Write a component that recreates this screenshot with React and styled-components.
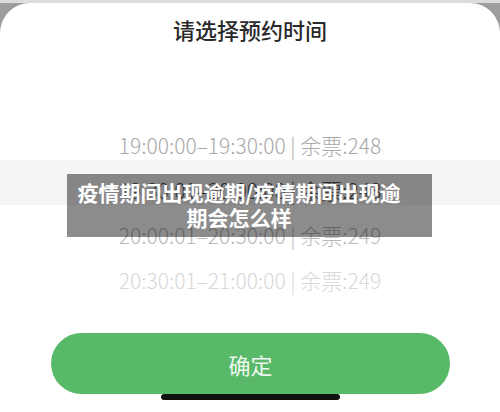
import React from "react";
import styled, { createGlobalStyle } from "styled-components";

const Global = createGlobalStyle`
  html, body { margin: 0; padding: 0; }
  body { font-family: "Noto Sans CJK SC", "Noto Sans", sans-serif; }
`;

const Screen = styled.div`
  position: relative;
  width: 500px;
  height: 412px;
  overflow: hidden;
  background: linear-gradient(to bottom, #dcdcdc 0 3px, #9d9d9d 3px);
`;

const Sheet = styled.div`
  margin-top: 3px;
  height: 409px;
  background: #fff;
  border-radius: 30px 30px 0 0;
  display: flex;
  flex-direction: column;
`;

const Title = styled.h1`
  margin: 11px 0 0;
  font-size: 22px;
  line-height: 30px;
  font-weight: 500;
  color: #2a2a2a;
  text-align: center;
`;

const Picker = styled.div`
  position: relative;
  margin-top: 78px;
  display: flex;
  flex-direction: column;
`;

const SelectionBand = styled.div`
  position: absolute;
  left: 0;
  right: 0;
  top: 38px;
  height: 45px;
  background: #f4f4f6;
`;

const Row = styled.div`
  position: relative;
  height: 45px;
  display: flex;
  align-items: center;
  justify-content: center;
  font-size: 21px;
  font-weight: 300;
  color: ${(p) => p.$color};
  white-space: pre;
`;

const ConfirmButton = styled.button`
  margin: 31px 50px 0 51px;
  height: 61px;
  border: none;
  border-radius: 31px;
  background: #58b968;
  color: #eef8ef;
  font-family: inherit;
  font-size: 22px;
  font-weight: 400;
  display: flex;
  align-items: center;
  justify-content: center;
`;

const HomeBar = styled.div`
  width: 179px;
  height: 6px;
  margin: 0 auto;
  border-radius: 3px;
  background: #111;
`;

const Caption = styled.div`
  position: absolute;
  left: 67px;
  top: 174px;
  width: 365px;
  height: 63px;
  box-sizing: border-box;
  padding: 6px 29px 0 8px;
  background: rgba(0, 0, 0, 0.45);
  color: #fff;
  font-size: 21px;
  font-weight: 700;
  line-height: 25px;
  text-align: center;
`;

const rows = [
  { text: "19:00:00–19:30:00 | 余票:248", color: "#a9a9a9" },
  { text: "19:30:01–20:00:00 | 余票:248", color: "#555" },
  { text: "20:00:01–20:30:00 | 余票:249", color: "#b9b9b9" },
  { text: "20:30:01–21:00:00 | 余票:249", color: "#d8d8d8" },
];

export default function App() {
  return (
    <Screen>
      <Global />
      <Sheet>
        <Title>请选择预约时间</Title>
        <Picker>
          <SelectionBand />
          {rows.map((r) => (
            <Row key={r.text} $color={r.color}>
              {r.text}
            </Row>
          ))}
        </Picker>
        <ConfirmButton>确定</ConfirmButton>
        <HomeBar />
      </Sheet>
      <Caption>疫情期间出现逾期/疫情期间出现逾期会怎么样</Caption>
    </Screen>
  );
}
